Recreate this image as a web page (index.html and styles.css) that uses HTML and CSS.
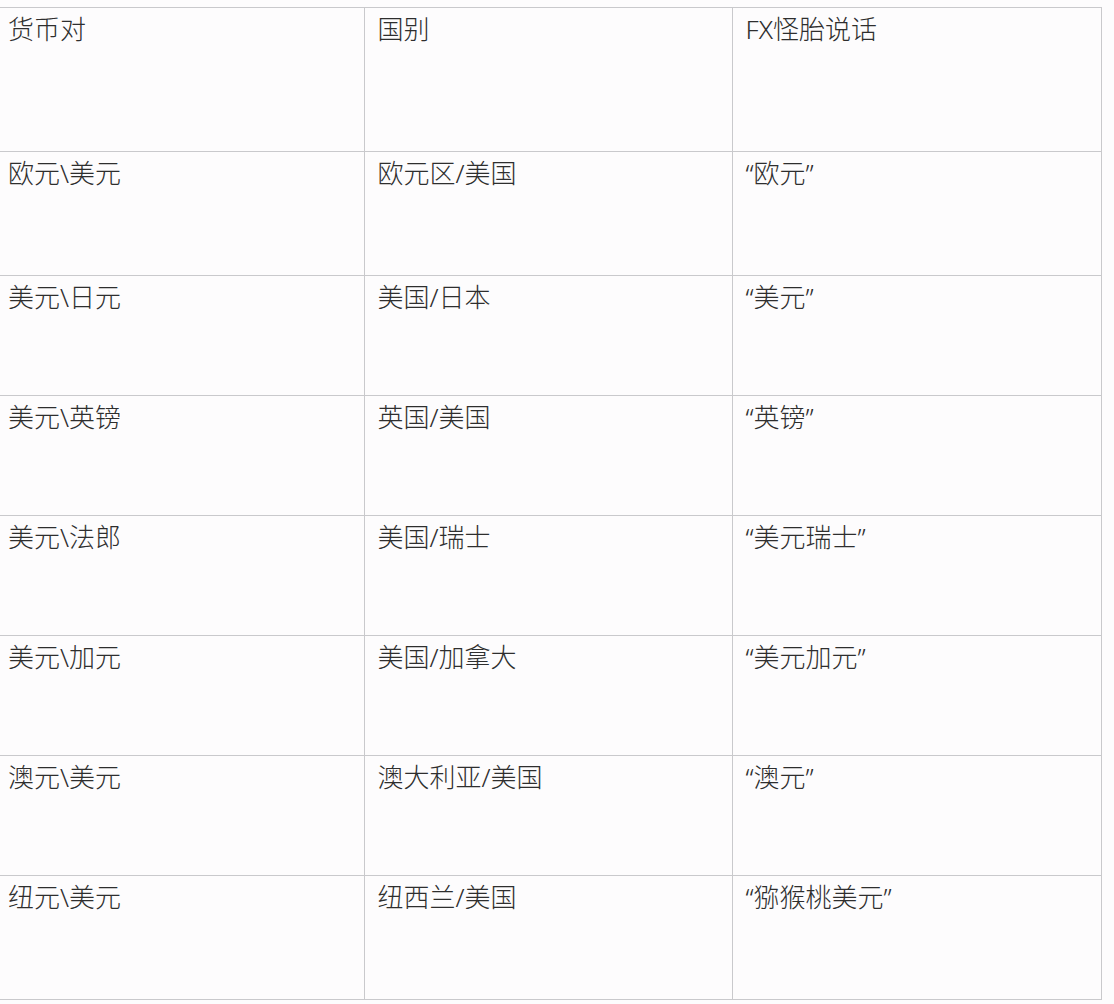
FILE: index.html
```html
<!DOCTYPE html>
<html lang="zh-CN">
<head>
<meta charset="utf-8">
<title>货币对</title>
<link rel="stylesheet" href="styles.css">
</head>
<body>
<table class="fx">
  <colgroup>
    <col class="c1"><col class="c2"><col class="c3">
  </colgroup>
  <tr class="head"><td>货币对</td><td>国别</td><td>FX怪胎说话</td></tr>
  <tr class="tall"><td>欧元\美元</td><td>欧元区/美国</td><td>“欧元”</td></tr>
  <tr><td>美元\日元</td><td>美国/日本</td><td>“美元”</td></tr>
  <tr><td>美元\英镑</td><td>英国/美国</td><td>“英镑”</td></tr>
  <tr><td>美元\法郎</td><td>美国/瑞士</td><td>“美元瑞士”</td></tr>
  <tr><td>美元\加元</td><td>美国/加拿大</td><td>“美元加元”</td></tr>
  <tr><td>澳元\美元</td><td>澳大利亚/美国</td><td>“澳元”</td></tr>
  <tr class="tall"><td>纽元\美元</td><td>纽西兰/美国</td><td>“猕猴桃美元”</td></tr>
</table>
</body>
</html>
```
FILE: styles.css
```css
html, body {
  margin: 0;
  padding: 0;
  background: #fdfcfd;
}
body {
  padding-top: 7px;
  font-family: "Noto Sans", "Noto Sans CJK SC", sans-serif;
  font-weight: 300;
  color: #2e2e2e;
}
.fx {
  border-collapse: collapse;
  table-layout: fixed;
  width: 1106px;
  margin-left: -5px;
}
.c1 { width: 369px; }
.c2 { width: 368px; }
.c3 { width: 369px; }
.fx td {
  border: 1px solid #c9c9cc;
  vertical-align: top;
  font-size: 26px;
  line-height: 32px;
  padding: 5px 13px 0 13px;
  box-sizing: border-box;
}
.fx tr td:first-child { border-left: none; }
.fx tr { height: 120px; }
.fx tr.head { height: 144px; }
.fx tr.tall { height: 124px; }
```
